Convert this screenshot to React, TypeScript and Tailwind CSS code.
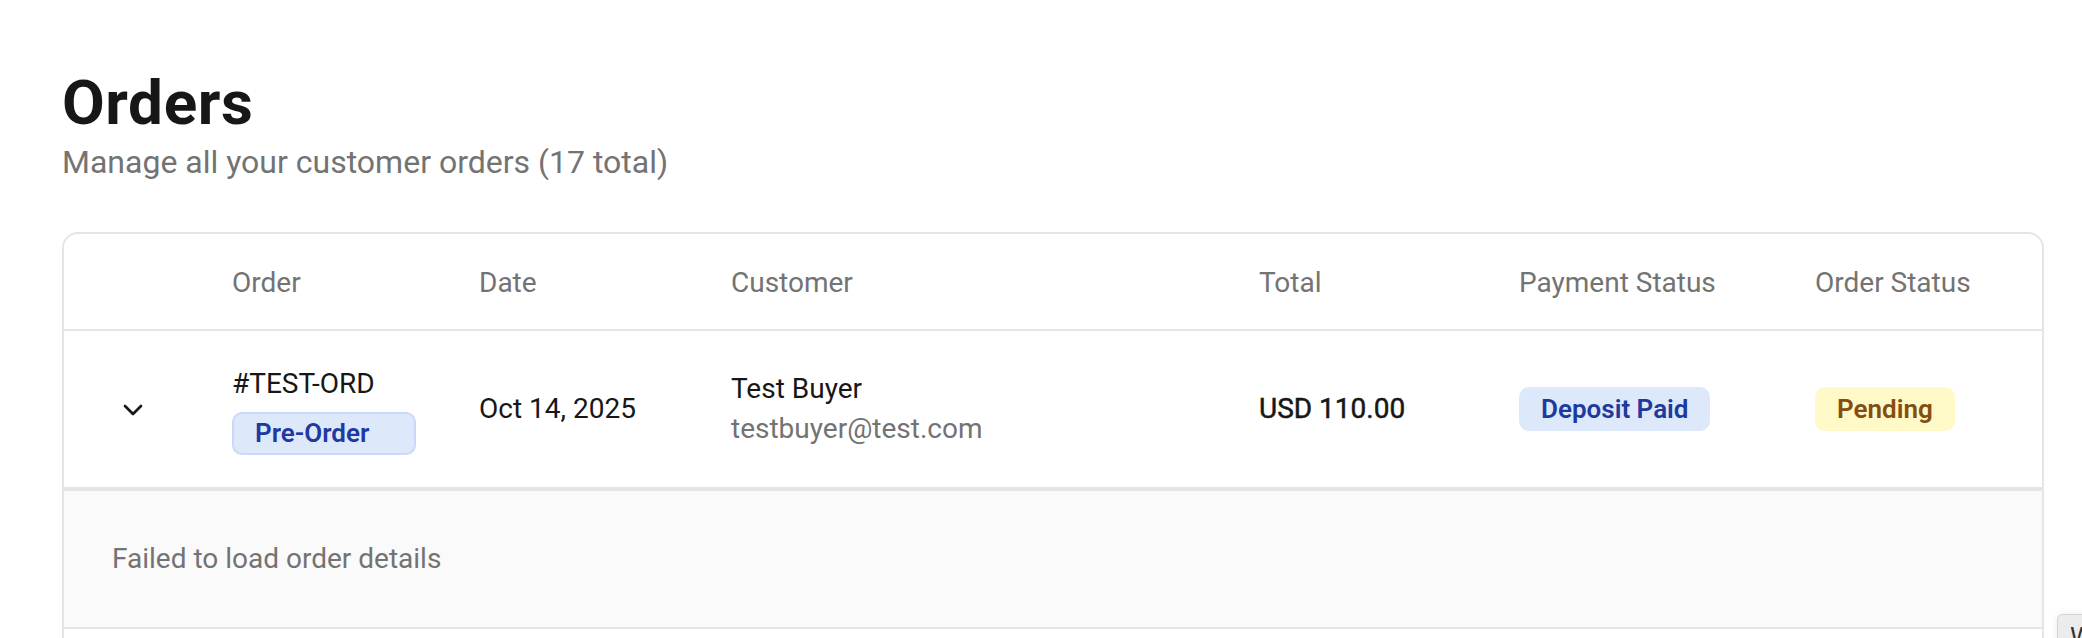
import { ChevronDown } from "lucide-react";

const columns = ["", "Order", "Date", "Customer", "Total", "Payment Status", "Order Status"];

const gridCols = "grid grid-cols-[168px_247px_252px_528px_260px_296px_1fr]";

export default function App() {
  return (
    <div className="relative h-[638px] w-[2082px] overflow-hidden bg-white font-[Roboto,sans-serif] text-[#171717]">
      <div className="pl-[62px] pr-[38px]">
        <h1 className="pt-[72px] text-[62px] leading-[62px] font-bold tracking-[0.01em] text-[#171717]">Orders</h1>
        <p className="mt-[4px] text-[32px] leading-[48px] text-[#737373]">Manage all your customer orders (17 total)</p>

        <div className="mt-[46px] rounded-[16px] border-2 border-[#e5e5e5]">
          {/* header */}
          <div className={`${gridCols} h-[97px] items-center border-b-2 border-[#e5e5e5]`}>
            {columns.map((col, i) => (
              <div key={i} className="pt-[2px] text-[28px] leading-[40px] text-[#737373]">
                {col}
              </div>
            ))}
          </div>

          {/* order row */}
          <div className={`${gridCols} h-[160px] items-center border-b-[4px] border-[#e5e5e5]`}>
            <div className="pl-[53px] pt-[2px]">
              <ChevronDown size={32} strokeWidth={2} className="text-[#171717]" />
            </div>
            <div className="flex flex-col">
              <span className="text-[28px] leading-[40px]">#TEST-ORD</span>
              <span className="mt-[8px] flex h-[43px] w-[184px] items-center rounded-[10px] border-2 border-[#c9daf8] bg-[#dde8fb] pl-[21px] text-[26px] font-semibold text-[#1e3a9f]">
                Pre-Order
              </span>
            </div>
            <div className="text-[28px] leading-[40px]">Oct 14, 2025</div>
            <div className="flex flex-col">
              <span className="text-[28px] leading-[40px]">Test Buyer</span>
              <span className="text-[28px] leading-[40px] text-[#737373]">testbuyer@test.com</span>
            </div>
            <div className="text-[28px] leading-[40px] [-webkit-text-stroke:0.5px_#171717]">USD 110.00</div>
            <div>
              <span className="inline-flex h-[44px] items-center rounded-[10px] bg-[#dde8fb] px-[22px] text-[26px] font-semibold text-[#1e3a9f]">
                Deposit Paid
              </span>
            </div>
            <div>
              <span className="inline-flex h-[44px] items-center rounded-[10px] bg-[#fef9c6] px-[22px] text-[26px] font-semibold text-[#854d0e]">
                Pending
              </span>
            </div>
          </div>

          {/* expanded details */}
          <div className="flex h-[138px] items-center border-b-2 border-[#e5e5e5] bg-[#fafafa] px-[48px]">
            <span className="text-[28px] leading-[40px] text-[#737373]">Failed to load order details</span>
          </div>

          <div className="h-[60px]" />
        </div>
      </div>

      {/* floating widget peeking in bottom-right */}
      <div className="absolute left-[2057px] top-[614px] h-[60px] w-[60px] rounded-tl-[6px] border border-[#d4d4d4] bg-[#ececec] pl-[12px] pt-[6px] text-[26px] leading-[32px] text-[#333] shadow-[0_0_8px_rgba(0,0,0,0.08)]">
        W
      </div>
    </div>
  );
}
